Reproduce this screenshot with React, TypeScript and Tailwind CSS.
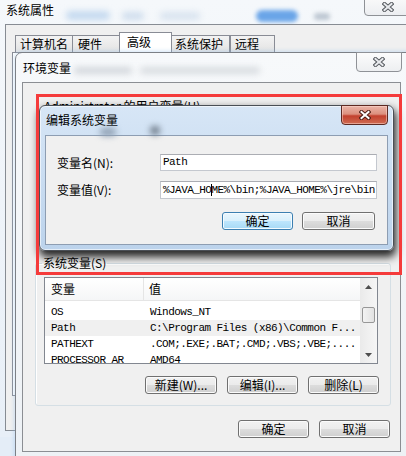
import React from 'react';

function CloseX({ red }: { red?: boolean }) {
  const d = 'M2.5 2L9.5 8M9.5 2L2.5 8';
  return (
    <svg width="12" height="10" viewBox="0 0 12 10">
      <path d={d} stroke={red ? '#4a1d15' : '#55595e'} strokeWidth="4" strokeLinecap="square" fill="none" />
      <path d={d} stroke={red ? '#ffffff' : '#e9ebee'} strokeWidth="2" strokeLinecap="square" fill="none" />
    </svg>
  );
}

function Btn({ label, className, focus }: { label: string; className: string; focus?: boolean }) {
  return (
    <div
      className={
        'flex h-[18px] items-center justify-center rounded-[3px] border text-[12px] leading-none ' +
        (focus
          ? 'border-[#3c7fb1] bg-[linear-gradient(#eaf6fd_0%,#d9f0fc_50%,#bee6fd_50%,#a7d9f5_100%)] shadow-[inset_0_0_0_1px_#f4fbff] '
          : 'border-[#707070] bg-[linear-gradient(#f2f2f2_0%,#ebebeb_50%,#dddddd_50%,#cfcfcf_100%)] shadow-[inset_0_0_0_1px_#fbfbfb] ') +
        className
      }
    >
      {label}
    </div>
  );
}

const rows = [
  { name: 'OS', value: 'Windows_NT' },
  { name: 'Path', value: 'C:\\Program Files (x86)\\Common F...', sel: true },
  { name: 'PATHEXT', value: '.COM;.EXE;.BAT;.CMD;.VBS;.VBE;....' },
  { name: 'PROCESSOR_AR', value: 'AMD64' },
];

export default function App() {
  return (
    <div className="relative h-[456px] w-[406px] overflow-hidden bg-[#e4edf7] text-[12px] text-black font-['Noto_Sans_CJK_SC',sans-serif]">
      {/* 系统属性, the window at the back */}
      <div className="absolute left-0 top-0 h-[437px] w-[406px] bg-[linear-gradient(#f5f8fb,#e8eff7)]">
        <div className="absolute left-[66px] top-[11px] h-[9px] w-[44px] rounded-full bg-[#c4d9ef] blur-[3px]" />
        <div className="absolute left-[122px] top-[12px] h-[8px] w-[22px] rounded-full bg-[#cfdded] blur-[3px]" />
        <div className="absolute left-[160px] top-[12px] h-[8px] w-[40px] rounded-full bg-[#d8e3ef] blur-[3px]" />
        <div className="absolute left-[256px] top-[10px] h-[12px] w-[42px] rounded-full bg-[#6aa5e8] blur-[2px]" />
        <div className="absolute left-[314px] top-[13px] h-[7px] w-[16px] rounded-full bg-[#bcc6d1] blur-[2px]" />
        <div className="pl-[6px] pt-[2px] text-[12px] leading-[16px]">系统属性</div>
        <div className="absolute left-[364px] top-[-5px] flex h-[21px] w-[48px] items-end justify-center rounded-b-[4px] border border-[#8e9196] bg-[linear-gradient(#fbfbfb,#eceef1)] pb-[3px]">
          <CloseX />
        </div>
        <div className="absolute left-[5px] top-[24px] h-[407px] w-[410px] border-b border-l border-t border-[#878c93] bg-[#f0f0f0] pl-[6px] pt-[7px]">
          <div className="flex h-[20px] items-end pl-[3px]">
            <div className="h-[17px] w-[58px] border border-b-0 border-[#898c95] bg-[linear-gradient(#f3f3f3,#e3e3e3)] pl-[4px] leading-[16px]">计算机名</div>
            <div className="h-[17px] w-[48px] -ml-px border border-b-0 border-[#898c95] bg-[linear-gradient(#f3f3f3,#e3e3e3)] pl-[5px] leading-[16px]">硬件</div>
            <div className="h-[20px] w-[53px] -ml-px border border-b-0 border-[#898c95] bg-white pl-[7px] leading-[17px]">高级</div>
            <div className="h-[17px] w-[59px] -ml-px border border-b-0 border-[#898c95] bg-[linear-gradient(#f3f3f3,#e3e3e3)] pl-[3px] leading-[16px]">系统保护</div>
            <div className="h-[17px] w-[45px] border border-b-0 border-[#898c95] bg-[linear-gradient(#f3f3f3,#e3e3e3)] pl-[4px] leading-[16px]">远程</div>
          </div>
          <div className="h-[344px] w-[400px] border border-[#898c95] bg-white" />
        </div>
      </div>

      {/* 环境变量 */}
      <div className="absolute left-[15px] top-[52px] h-[410px] w-[400px] rounded-tl-[7px] border border-[#7c8086] bg-[linear-gradient(#f7f9fb,#edf1f5)] shadow-[0_0_5px_rgba(150,195,235,0.6)]">
        <div className="absolute left-[58px] top-[14px] h-[7px] w-[58px] rounded-full bg-[#d3d7dc] blur-[3px]" />
        <div className="absolute left-[124px] top-[14px] h-[7px] w-[120px] rounded-full bg-[#d8dce0] blur-[3px]" />
        <div className="absolute left-[340px] top-[-1px] flex h-[20px] w-[46px] items-center justify-center rounded-b-[4px] border border-[#8f9297] bg-[linear-gradient(#fcfcfc,#edeff1)]">
          <CloseX />
        </div>
        <div className="h-[29px] pl-[7px] pt-[8px] text-[12px] leading-[14px]">环境变量</div>
        <div className="ml-[6px] flex h-[370px] w-[379px] flex-col border border-[#8b8e93] bg-[#f0f0f0] pl-[12px] pr-[9px]">
          <div className="h-[173px] pl-[9px] pt-[16px] leading-[14px]">Administrator 的用户变量(U)</div>
          <fieldset className="h-[150px] rounded-[3px] border border-[#d5dfe5] shadow-[inset_1px_1px_0_#ffffff]">
            <legend className="ml-[6px] px-[1px] text-[12px] leading-[14px]">系统变量(S)</legend>
            <div className="ml-[8px] mt-[7px] flex h-[87px] w-[334px] border border-[#828790] bg-white">
              <div className="flex-1 overflow-hidden">
                <div className="flex h-[23px] border-b border-[#e5e5e5] bg-[linear-gradient(#ffffff,#f5f6f7)] leading-[22px]">
                  <div className="w-[99px] border-r border-[#e5e5e5] pl-[6px]">变量</div>
                  <div className="pl-[5px]">值</div>
                </div>
                <div className="pt-[3px] font-['Liberation_Mono',monospace] text-[11px] tracking-[-0.55px]">
                  {rows.map((r) => (
                    <div key={r.name} className={'flex h-[16px] items-center whitespace-nowrap ' + (r.sel ? 'bg-[#f0f0f0]' : '')}>
                      <div className="w-[99px] pl-[6px]">{r.name}</div>
                      <div className="pl-[6px]">{r.value}</div>
                    </div>
                  ))}
                </div>
              </div>
              <div className="flex w-[17px] flex-col bg-[linear-gradient(90deg,#eaeaea,#f6f6f6)]">
                <div className="flex h-[17px] items-center justify-center">
                  <svg width="7" height="4" viewBox="0 0 7 4"><path d="M0 4L3.5 0L7 4Z" fill="#4d4d4d" /></svg>
                </div>
                <div className="ml-[2px] mt-[12px] h-[16px] w-[13px] rounded-[2px] border border-[#979797] bg-[linear-gradient(90deg,#f3f3f3,#e2e2e2)]" />
                <div className="flex-1" />
                <div className="flex h-[17px] items-center justify-center">
                  <svg width="7" height="4" viewBox="0 0 7 4"><path d="M0 0L3.5 4L7 0Z" fill="#4d4d4d" /></svg>
                </div>
              </div>
            </div>
            <div className="mt-[12px] flex justify-end gap-[10px] pr-[11px]">
              <Btn label="新建(W)..." className="w-[72px]" />
              <Btn label="编辑(I)..." className="w-[71px]" />
              <Btn label="删除(L)" className="w-[71px]" />
            </div>
          </fieldset>
          <div className="mr-[1px] mt-[14px] flex justify-end gap-[10px]">
            <Btn label="确定" className="w-[71px]" />
            <Btn label="取消" className="w-[71px]" />
          </div>
        </div>
      </div>

      {/* 编辑系统变量 */}
      <div className="absolute left-[39px] top-[105px] h-[146px] w-[355px] rounded-[6px] border border-[#4a4f56] bg-[linear-gradient(#d7e6f6,#bcd3ec)] shadow-[inset_0_0_0_1px_rgba(255,255,255,0.6),1px_5px_8px_1px_rgba(0,0,0,0.85)]">
        <div className="absolute left-[60px] top-[22px] h-[8px] w-[16px] rounded-full bg-[#8fa0b3] blur-[3px]" />
        <div className="absolute left-[110px] top-[20px] h-[9px] w-[10px] rounded-full bg-[#6f7c8a] blur-[3px]" />
        <div className="absolute left-[301px] top-[-1px] flex h-[20px] w-[47px] items-center justify-center rounded-b-[4px] border border-[#5d2a22] bg-[linear-gradient(#eab5a8_0%,#dc907e_45%,#c2412e_55%,#d06c52_100%)] shadow-[inset_0_0_0_1px_rgba(255,220,210,0.5)]">
          <CloseX red />
        </div>
        <div className="h-[29px] pl-[6px] pt-[7px] text-[12px] leading-[14px]">编辑系统变量</div>
        <div className="mx-[5px] h-[110px] border border-[#8d9db2] bg-[#f0f0f0] pr-[10px]">
          <div className="mt-[18px] flex h-[17px] items-center">
            <div className="pl-[11px]">变量名(N):</div>
            <div className="ml-auto h-[17px] w-[217px] border border-[#c4c8cf] border-t-[#abadb3] bg-white pl-[2px] font-['Liberation_Mono',monospace] text-[11px] leading-[15px] tracking-[-0.55px]">Path</div>
          </div>
          <div className="mt-[10px] flex h-[18px] items-center">
            <div className="pl-[11px]">变量值(V):</div>
            <div className="ml-auto h-[18px] w-[217px] overflow-hidden whitespace-nowrap border border-[#c4c8cf] border-t-[#abadb3] bg-white pl-[2px] font-['Liberation_Mono',monospace] text-[11px] leading-[16px] tracking-[-0.55px]">
              %JAVA_HO<span className="shadow-[inset_1px_0_0_#000]">ME%\bin;%JAVA_HOME%\jre\bin</span>
            </div>
          </div>
          <div className="mt-[13px] flex justify-end gap-[9px] pr-[2px]">
            <Btn label="确定" className="w-[71px]" focus />
            <Btn label="取消" className="w-[73px]" />
          </div>
        </div>
      </div>

      {/* red marker */}
      <div className="absolute left-[36px] top-[94px] h-[181px] w-[366px] border-[3px] border-[#f53b3b]" />
    </div>
  );
}
